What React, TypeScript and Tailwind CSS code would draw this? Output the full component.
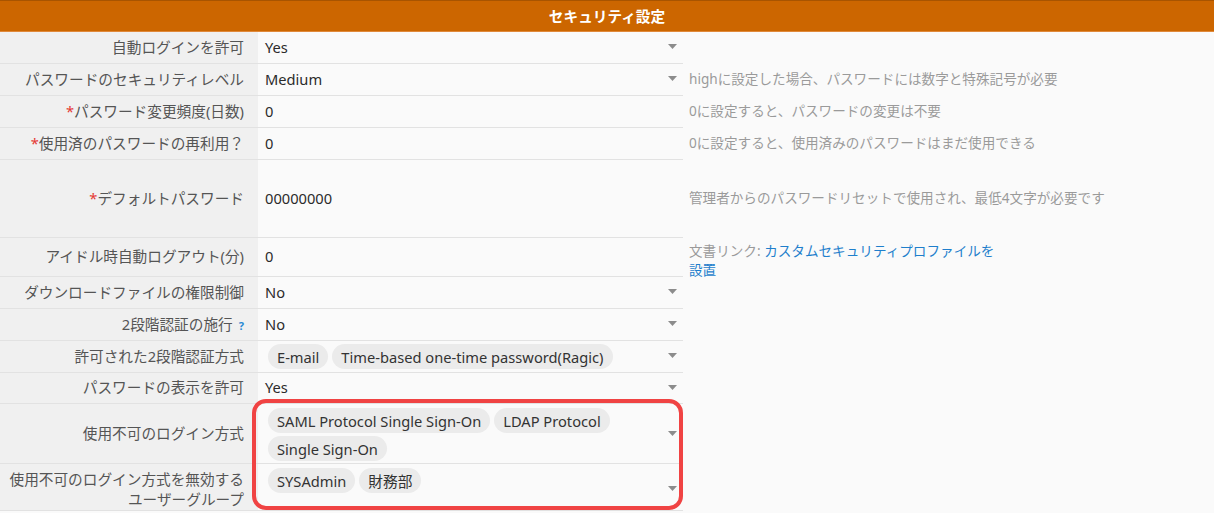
import type { ReactNode } from "react";

type Row = {
  label: ReactNode;
  value: ReactNode;
  hint?: ReactNode;
  height: string;
  select?: boolean;
  arrowAlign?: "center" | "lower";
  valueTop?: boolean;
};

function Arrow() {
  return (
    <svg width="9" height="5" viewBox="0 0 9 5" className="shrink-0">
      <polygon points="0,0 9,0 4.5,5" fill="#8c8c8c" />
    </svg>
  );
}

function Tag({ children }: { children: ReactNode }) {
  return (
    <span className="inline-flex h-[25px] items-center rounded-full bg-[#ebebeb] px-[9px] text-[#333]">
      {children}
    </span>
  );
}

function Req() {
  return <span className="text-[#e53935]">*</span>;
}

const rows: Row[] = [
  { label: "自動ログインを許可", value: "Yes", height: "h-[32px]", select: true },
  {
    label: "パスワードのセキュリティレベル",
    value: "Medium",
    hint: "highに設定した場合、パスワードには数字と特殊記号が必要",
    height: "h-[32px]",
    select: true,
  },
  {
    label: (
      <>
        <Req />
        パスワード変更頻度(日数)
      </>
    ),
    value: "0",
    hint: "0に設定すると、パスワードの変更は不要",
    height: "h-[32px]",
  },
  {
    label: (
      <>
        <Req />
        使用済のパスワードの再利用？
      </>
    ),
    value: "0",
    hint: "0に設定すると、使用済みのパスワードはまだ使用できる",
    height: "h-[32px]",
  },
  {
    label: (
      <>
        <Req />
        デフォルトパスワード
      </>
    ),
    value: "00000000",
    hint: "管理者からのパスワードリセットで使用され、最低4文字が必要です",
    height: "h-[78px]",
  },
  {
    label: "アイドル時自動ログアウト(分)",
    value: "0",
    hint: (
      <div className="pt-[6px] leading-[19px]">
        <div>
          文書リンク: <span className="text-[#1f7fcc]">カスタムセキュリティプロファイルを</span>
        </div>
        <div className="text-[#1f7fcc]">設置</div>
      </div>
    ),
    height: "h-[39px]",
  },
  { label: "ダウンロードファイルの権限制御", value: "No", height: "h-[32px]", select: true },
  {
    label: (
      <>
        2段階認証の施行
        <span className="ml-[6px] text-[11px] font-bold text-[#2a8ad4]">?</span>
      </>
    ),
    value: "No",
    height: "h-[32px]",
    select: true,
  },
  {
    label: "許可された2段階認証方式",
    value: (
      <div className="flex gap-[4px] pl-[3px] pt-[2px]">
        <Tag>E-mail</Tag>
        <Tag>Time-based one-time password(Ragic)</Tag>
      </div>
    ),
    height: "h-[32px]",
    select: true,
  },
  { label: "パスワードの表示を許可", value: "Yes", height: "h-[31px]", select: true },
  {
    label: "使用不可のログイン方式",
    value: (
      <div className="flex w-[360px] flex-wrap gap-x-[4px] gap-y-[3px] pl-[3px] pt-[4px]">
        <Tag>SAML Protocol Single Sign-On</Tag>
        <Tag>LDAP Protocol</Tag>
        <Tag>Single Sign-On</Tag>
      </div>
    ),
    height: "h-[60px]",
    select: true,
    valueTop: true,
  },
  {
    label: (
      <span className="block pt-[5px] leading-[20px]">
        使用不可のログイン方式を無効する
        <br />
        ユーザーグループ
      </span>
    ),
    value: (
      <div className="flex gap-[4px] pl-[3px] pt-[4px]">
        <Tag>SYSAdmin</Tag>
        <Tag>財務部</Tag>
      </div>
    ),
    height: "h-[47px]",
    select: true,
    valueTop: true,
    arrowAlign: "lower",
  },
];

export default function App() {
  return (
    <div
      className="relative min-h-[513px] w-[1214px] bg-[#fafafa] text-[14.67px]"
      style={{ fontFamily: '"Noto Sans", "Noto Sans CJK JP", sans-serif' }}
    >
      <div className="flex h-[32px] items-center justify-center border-t border-b border-t-[#a85400] border-b-[#e0893a] bg-[#cc6600] pb-[1px] font-bold text-white">
        セキュリティ設定
      </div>
      <div className="grid grid-cols-[258px_425px_1fr]">
        {rows.map((row, index) => (
          <div key={index} className="contents">
            <div
              className={`flex items-center justify-end border-b border-[#e2e2e2] bg-[#f0f0f0] pb-[2px] pr-[14px] text-right text-[#555] ${row.height}`}
            >
              <span>{row.label}</span>
            </div>
            <div
              className={`flex justify-between border-b border-[#e2e2e2] pl-[7px] pr-[6px] text-[#2b2b2b] ${row.height} ${
                row.valueTop ? "items-start" : "items-center pb-[2px]"
              }`}
            >
              <div>{row.value}</div>
              {row.select ? (
                <div
                  className={`flex h-full ${
                    row.arrowAlign === "lower" ? "items-end pb-[19px]" : "items-center"
                  }`}
                >
                  <Arrow />
                </div>
              ) : null}
            </div>
            <div className={`flex items-center pb-[2px] pl-[6px] text-[13.6px] text-[#9a9a9a] ${row.height}`}>
              {row.hint}
            </div>
          </div>
        ))}
      </div>
      <div className="pointer-events-none absolute left-[252px] top-[399px] h-[111px] w-[431px] rounded-[14px] border-4 border-[#f04343]" />
    </div>
  );
}
